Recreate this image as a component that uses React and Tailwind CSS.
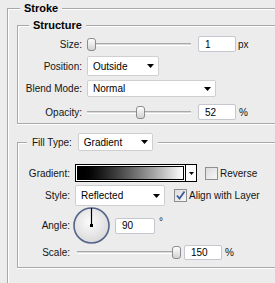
import React from "react";

const Slider = ({ value, min, max, width }) => {
  const left = ((value - min) / (max - min)) * (width - 9);
  return (
    <div className="relative h-[13px]" style={{ width }}>
      <div className="absolute left-0 right-0 top-[5px] h-[3px] border-t border-b border-t-[#a9a9a9] border-b-white bg-[#d9d9d9]" />
      <div
        className="absolute top-0 h-[13px] w-[9px] rounded-[3px] border border-[#8c8c8c] bg-gradient-to-b from-white to-[#d2d2d2]"
        style={{ left }}
      />
    </div>
  );
};

const Field = ({ value, className }) => (
  <div
    className={`flex items-center rounded-[2px] border border-[#c4c8ce] bg-white pl-[6px] text-black ${className}`}
  >
    {value}
  </div>
);

const Arrow = () => (
  <svg width="7" height="4" viewBox="0 0 7 4">
    <path d="M0 0h7L3.5 4z" fill="#000" />
  </svg>
);

const Select = ({ label, className }) => (
  <div
    className={`flex items-center justify-between rounded-[2px] border border-[#cfcfcf] bg-white pl-[5px] pr-[4px] text-black ${className}`}
  >
    <span>{label}</span>
    <Arrow />
  </div>
);

const Checkbox = ({ checked }) => (
  <div className="flex h-[13px] w-[13px] items-center justify-center border border-[#8e8f8f] bg-gradient-to-br from-[#dcdcdc] to-[#f7f7f7]">
    {checked && (
      <svg width="11" height="11" viewBox="0 0 11 11">
        <path d="M2 5.5 L4.5 8.5 L9.5 1.5" fill="none" stroke="#3a5aa0" strokeWidth="1.8" />
      </svg>
    )}
  </div>
);

const AngleDial = () => (
  <svg width="37" height="37" viewBox="0 0 37 37">
    <defs>
      <radialGradient id="dial" cx="45%" cy="40%" r="60%">
        <stop offset="0" stopColor="#fbfbfb" />
        <stop offset="1" stopColor="#dadada" />
      </radialGradient>
    </defs>
    <circle cx="18.5" cy="18.5" r="17.5" fill="url(#dial)" stroke="#55648a" strokeWidth="1.6" />
    <line x1="18.5" y1="18.5" x2="18.5" y2="1" stroke="#000" strokeWidth="1.2" />
    <rect x="17" y="17" width="3" height="3" fill="#000" />
  </svg>
);

export default function App() {
  return (
    <div className="h-[283px] w-[275px] overflow-hidden bg-[#ececec] font-['Liberation_Sans',Arial,sans-serif] text-[10px] text-[#141414]">
      <fieldset className="ml-[7px] mt-[2px] w-[300px] border-l border-t border-[#a8a8a8] pb-[40px] shadow-[inset_1px_1px_0_#fff]">
        <legend className="ml-[12px] bg-[#ececec] px-[4px] text-[11px] font-bold leading-[12px] text-black">
          Stroke
        </legend>

        {/* Structure */}
        <fieldset className="ml-[9px] mt-[5px] w-[280px] border-b border-l border-t border-[#a8a8a8] pb-[3px] shadow-[inset_1px_1px_0_#fff,0_1px_0_#fff]">
          <legend className="ml-[11px] bg-[#ececec] px-[4px] text-[11px] font-bold leading-[12px] text-black">
            Structure
          </legend>

          <div className="mt-[5px] flex h-[16px] items-center">
            <span className="w-[64px] text-right">Size:</span>
            <div className="ml-[5px]">
              <Slider value={1} min={1} max={250} width={104} />
            </div>
            <Field value="1" className="ml-[7px] h-[16px] w-[38px]" />
            <span className="ml-[2px]">px</span>
          </div>

          <div className="mt-[4px] flex h-[20px] items-center">
            <span className="w-[64px] text-right">Position:</span>
            <Select label="Outside" className="ml-[5px] h-[20px] w-[72px]" />
          </div>

          <div className="mt-[4px] flex h-[17px] items-center">
            <span className="w-[64px] text-right">Blend Mode:</span>
            <Select label="Normal" className="ml-[5px] h-[17px] w-[129px]" />
          </div>

          <div className="mt-[7px] flex h-[16px] items-center">
            <span className="w-[64px] text-right">Opacity:</span>
            <div className="ml-[5px]">
              <Slider value={52} min={0} max={100} width={104} />
            </div>
            <Field value="52" className="ml-[7px] h-[16px] w-[38px]" />
            <span className="ml-[3px]">%</span>
          </div>
        </fieldset>

        {/* Fill Type */}
        <fieldset className="ml-[9px] mt-[9px] w-[280px] border-b border-l border-t border-[#a8a8a8] pb-[7px] shadow-[inset_1px_1px_0_#fff,0_1px_0_#fff]">
          <legend className="ml-[9px] bg-[#ececec] px-[5px]">
            <div className="flex items-center">
              <span>Fill Type:</span>
              <Select label="Gradient" className="ml-[6px] h-[18px] w-[75px]" />
            </div>
          </legend>

          <div className="mt-[13px] flex h-[18px] items-center">
            <span className="w-[52px] text-right">Gradient:</span>
            <div className="ml-[5px] flex h-[18px] w-[122px] border border-black bg-white">
              <div className="m-[1px] flex-1 border border-black bg-gradient-to-r from-black to-white" />
              <div className="flex w-[11px] items-center justify-center border-l border-black">
                <svg width="5" height="3" viewBox="0 0 5 3">
                  <path d="M0 0h5L2.5 3z" fill="#000" />
                </svg>
              </div>
            </div>
            <div className="ml-[8px]">
              <Checkbox />
            </div>
            <span className="ml-[2px]">Reverse</span>
          </div>

          <div className="mt-[3px] flex h-[21px] items-center">
            <span className="w-[52px] text-right">Style:</span>
            <Select label="Reflected" className="ml-[5px] h-[21px] w-[90px]" />
            <div className="ml-[9px]">
              <Checkbox checked />
            </div>
            <span className="ml-[2px]">Align with Layer</span>
          </div>

          <div className="mt-[1px] flex h-[37px] items-center">
            <span className="w-[52px] text-right">Angle:</span>
            <div className="ml-[3px]">
              <AngleDial />
            </div>
            <Field value="90" className="ml-[5px] h-[16px] w-[40px]" />
            <span className="mb-[8px] ml-[4px]">°</span>
          </div>

          <div className="mt-[1px] flex h-[15px] items-center">
            <span className="w-[52px] text-right">Scale:</span>
            <div className="ml-[7px]">
              <Slider value={150} min={10} max={150} width={104} />
            </div>
            <Field value="150" className="ml-[3px] h-[15px] w-[38px]" />
            <span className="ml-[3px]">%</span>
          </div>
        </fieldset>
      </fieldset>
    </div>
  );
}
